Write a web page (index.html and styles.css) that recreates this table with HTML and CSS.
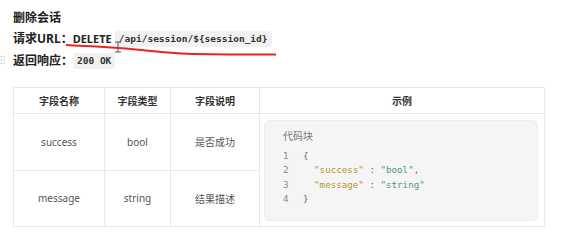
FILE: index.html
```html
<!DOCTYPE html>
<html>
<head>
    <title>删除会话</title>
    <link rel="stylesheet" href="styles.css">
</head>
<body>
<div class="doc">
    <svg class="handle" width="6" height="10" viewBox="0 0 6 10">
        <circle cx="1.2" cy="1.5" r="0.8"/><circle cx="4.2" cy="1.5" r="0.8"/>
        <circle cx="1.2" cy="5" r="0.8"/><circle cx="4.2" cy="5" r="0.8"/>
        <circle cx="1.2" cy="8.5" r="0.8"/><circle cx="4.2" cy="8.5" r="0.8"/>
    </svg>
    <svg class="scribble" width="290" height="20" viewBox="0 0 290 20">
        <path d="M66 3 C80 4 92 4 104 5 C120 6 132 7 146 8.5 C165 10.5 178 11.5 192 12 C225 12.5 255 12.5 276 12.5" />
    </svg>
    <svg class="cursor" width="8" height="12" viewBox="0 0 8 12">
        <path d="M1 1 H7 M4 1 V11 M1 11 H7" />
    </svg>

    <h3 class="title">删除会话</h3>
    <p class="line">请求URL：<b class="method">DELETE</b> <code>/api/session/${session_id}</code></p>
    <p class="line">返回响应：<code>200 OK</code></p>

    <table class="fields">
        <thead>
        <tr>
            <th class="c1">字段名称</th>
            <th class="c2">字段类型</th>
            <th class="c3">字段说明</th>
            <th class="c4">示例</th>
        </tr>
        </thead>
        <tbody>
        <tr>
            <td>success</td>
            <td>bool</td>
            <td>是否成功</td>
            <td class="example" rowspan="2">
                <div class="codeblock">
                    <div class="label">代码块</div>
                    <div class="codeline"><span class="ln">1</span><span>{</span></div>
                    <div class="codeline"><span class="ln">2</span><span>  <span class="key">"success"</span> : <span class="val">"bool"</span>,</span></div>
                    <div class="codeline"><span class="ln">3</span><span>  <span class="key">"message"</span> : <span class="val">"string"</span></span></div>
                    <div class="codeline"><span class="ln">4</span><span>}</span></div>
                </div>
            </td>
        </tr>
        <tr>
            <td>message</td>
            <td>string</td>
            <td>结果描述</td>
        </tr>
        </tbody>
    </table>
</div>
</body>
</html>
```

FILE: styles.css
```css
body {
    margin: 0;
    background: #ffffff;
    font-family: "Noto Sans", "Noto Sans CJK SC", sans-serif;
    color: #333333;
}

.doc {
    position: relative;
    padding: 9px 0 0 13px;
}

.title {
    margin: 0 0 3px 0;
    font-size: 12px;
    line-height: 18px;
    font-weight: bold;
    color: #222222;
}

.line {
    margin: 0 0 4px 0;
    font-size: 12px;
    line-height: 18px;
    font-weight: bold;
    color: #222222;
}

.method {
    font-weight: bold;
    font-size: 11px;
}

code {
    display: inline-block;
    font-family: "DejaVu Sans Mono", monospace;
    font-weight: bold;
    font-size: 9.5px;
    line-height: 16px;
    padding: 0 4px;
    background: #f1f1f1;
    border-radius: 3px;
    color: #333333;
    vertical-align: 1px;
}

.fields {
    margin-top: 17px;
    border-collapse: collapse;
    width: 532px;
    font-size: 10px;
    color: #555555;
}

.fields th,
.fields td {
    border: 1px solid #e8e8e8;
    text-align: center;
    padding: 0;
}

.fields th {
    height: 25px;
    font-weight: bold;
    color: #333333;
}

.fields td {
    height: 55px;
}

.c1 { width: 90px; }
.c2 { width: 65px; }
.c3 { width: 88px; }

.fields td.example {
    padding: 6px 6px 5px 4px;
    text-align: left;
    vertical-align: top;
}

.codeblock {
    background: #f5f5f6;
    border: 1px solid #ededed;
    border-radius: 6px;
    height: 82px;
    padding: 8px 18px 9px 18px;
}

.label {
    font-size: 10px;
    line-height: 14px;
    color: #777777;
    margin-bottom: 6px;
}

.codeline {
    font-family: "DejaVu Sans Mono", monospace;
    font-size: 9.2px;
    line-height: 14.3px;
    white-space: pre;
    color: #666666;
}

.ln {
    display: inline-block;
    width: 20px;
    color: #888888;
}

.key {
    color: #b8932f;
}

.val {
    color: #4f9a72;
}

.handle {
    position: absolute;
    left: 0;
    top: 55px;
    fill: #c8c8c8;
}

.scribble {
    position: absolute;
    left: 0;
    top: 42px;
    fill: none;
    stroke: #ee2222;
    stroke-width: 2;
}

.cursor {
    position: absolute;
    left: 114px;
    top: 41px;
    fill: none;
    stroke: #555555;
    stroke-width: 1;
}
```
